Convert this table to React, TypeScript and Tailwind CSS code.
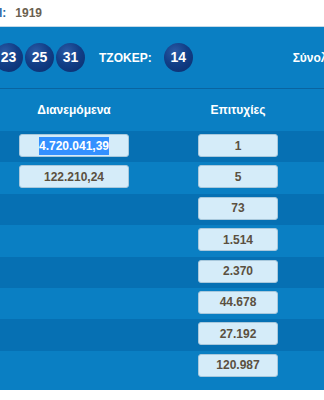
const balls = [23, 25, 31];

const rows: { amount?: string; hits: string; selected?: boolean }[] = [
  { amount: "4.720.041,39", hits: "1", selected: true },
  { amount: "122.210,24", hits: "5" },
  { hits: "73" },
  { hits: "1.514" },
  { hits: "2.370" },
  { hits: "44.678" },
  { hits: "27.192" },
  { hits: "120.987" },
];

function Ball({ n }: { n: number }) {
  return (
    <div className="flex h-[29px] w-[29px] shrink-0 items-center justify-center rounded-full bg-[radial-gradient(circle_at_38%_30%,#2b5ba6_0%,#123f88_45%,#0a2c6c_100%)] text-[14px] font-bold text-white">
      {n}
    </div>
  );
}

function Cell({ children, wide }: { children: React.ReactNode; wide?: boolean }) {
  return (
    <div
      className={`flex h-[23px] items-center justify-center rounded-[3px] border border-[#a8c8dc] bg-[#d5ecf9] text-[12px] font-bold text-[#5b5040] ${
        wide ? "w-[110px]" : "w-[80px]"
      }`}
    >
      {children}
    </div>
  );
}

export default function App() {
  return (
    <div className="h-[400px] w-[324px] overflow-hidden bg-white font-['Liberation_Sans',Arial,sans-serif]">
      <div className="flex h-[27px] items-center gap-[9px] border-b border-[#c3d9e8] text-[12px] font-bold">
        <span className="-ml-[1px] text-[#2a6aa6]">l:</span>
        <span className="text-[#6b6150]">1919</span>
      </div>

      <div className="bg-[#0a7fc3]">
        <div className="flex h-[62px] items-center whitespace-nowrap border-b border-[#0a64a0]">
          <div className="-ml-[6px] flex shrink-0 gap-[2px]">
            {balls.map((b) => (
              <Ball key={b} n={b} />
            ))}
          </div>
          <span className="ml-[14px] shrink-0 text-[12px] font-bold text-white">ΤΖΟΚΕΡ:</span>
          <div className="ml-[12px] shrink-0">
            <Ball n={14} />
          </div>
          <span className="ml-[100px] shrink-0 text-[12px] font-bold text-white">Σύνολο Στηλών:</span>
        </div>

        <div className="flex h-[42px] items-center text-[12px] font-bold text-white">
          <div className="w-[148px] shrink-0 text-center">Διανεμόμενα</div>
          <div className="w-[180px] shrink-0 text-center">Επιτυχίες</div>
        </div>

        {rows.map((r, i) => (
          <div
            key={i}
            className={`flex items-start pt-[3px] ${
              i % 2 === 0 ? "bg-[#0670b3]" : "bg-[#0a7fc3]"
            } ${i === rows.length - 1 ? "h-[39px]" : "h-[31.4px]"}`}
          >
            <div className="flex w-[148px] shrink-0 justify-center">
              {r.amount && (
                <Cell wide>
                  {r.selected ? (
                    <span className="bg-[#3390ff] text-white">{r.amount}</span>
                  ) : (
                    r.amount
                  )}
                </Cell>
              )}
            </div>
            <div className="flex w-[180px] shrink-0 justify-center">
              <Cell>{r.hits}</Cell>
            </div>
          </div>
        ))}
      </div>
    </div>
  );
}
